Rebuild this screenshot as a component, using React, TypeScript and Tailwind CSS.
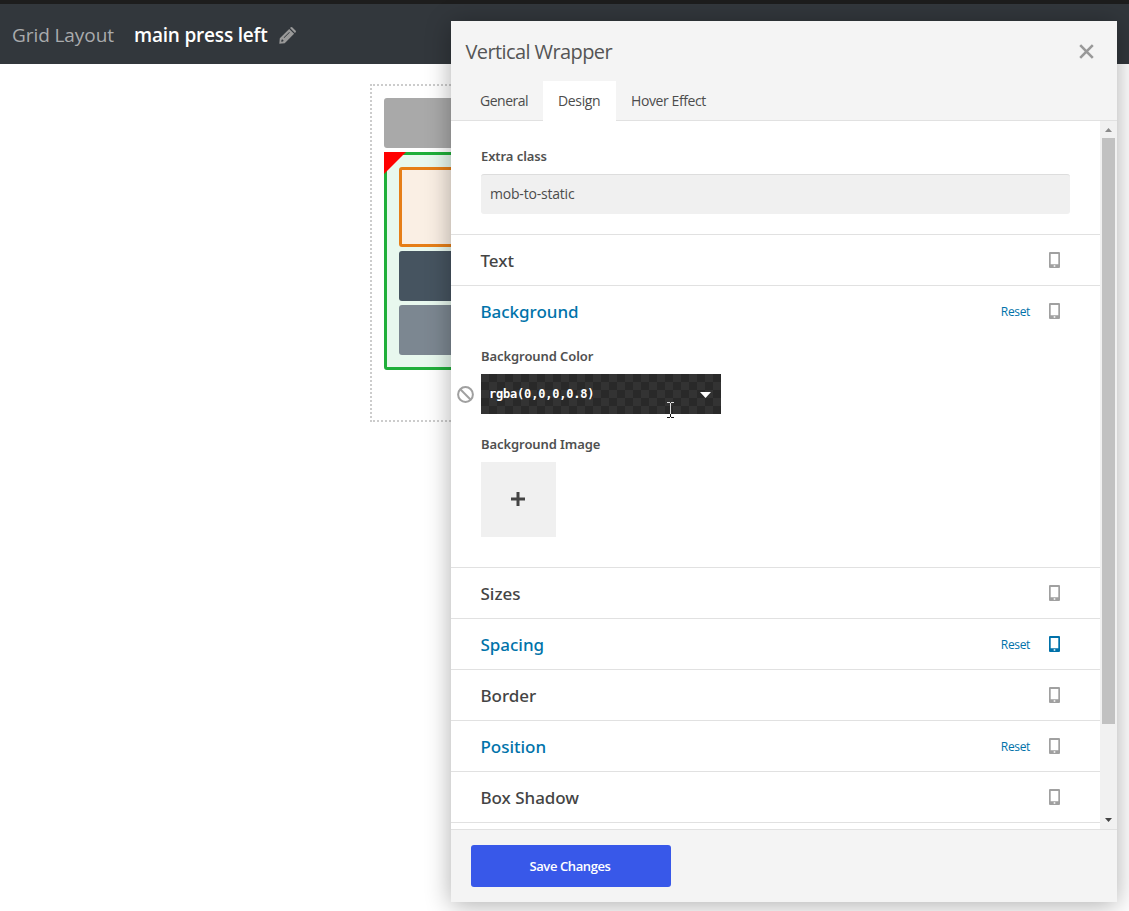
import type { ReactNode } from 'react';

const font = "font-['Open_Sans','Noto_Sans',sans-serif]";

function Phone({ active = false }: { active?: boolean }) {
  return (
    <svg width="11" height="16" viewBox="0 0 11 16" className={active ? 'text-[#0071a9]' : 'text-[#a0a0a0]'}>
      <path
        fill="currentColor"
        fillRule="evenodd"
        d="M1 0h9A1 1 0 0 1 11 1v14A1 1 0 0 1 10 16h-9A1 1 0 0 1 0 15v-14A1 1 0 0 1 1 0ZM1.700 2v10.300h7.600V2ZM4.700 13.200v1.600h1.600v-1.600Z"
      />
    </svg>
  );
}

type SectionProps = { title: string; changed?: boolean; phone?: boolean; children?: ReactNode };

function Section({ title, changed = false, phone = false, children }: SectionProps) {
  return (
    <section className="shrink-0 border-t border-[#e1e1e1]">
      <div className="flex h-[50px] items-center pl-[29.500px] pr-10">
        <h3 className={`pt-px font-['Noto_Sans',sans-serif] text-[17px] font-medium tracking-[-0.03px] ${changed ? 'text-[#0073aa]' : 'text-[#444]'}`}>{title}</h3>
        <div className="ml-auto flex items-center gap-[19px]">
          {changed && <span className="pt-0.5 text-[12px] tracking-[-0.35px] text-[#0073aa]">Reset</span>}
          <Phone active={phone} />
        </div>
      </div>
      {children}
    </section>
  );
}

function Label({ children }: { children: ReactNode }) {
  return <div className="font-['Noto_Sans',sans-serif] text-[13px] leading-[18px] font-semibold tracking-[-0.08px] text-[#505050]">{children}</div>;
}

function Header() {
  return (
    <header className="flex h-16 items-center border-t-4 border-[#1d1d1d] bg-[#32373c] pl-3">
      <span className="w-[122px] pt-0.5 text-[19px] tracking-[-0.08px] whitespace-nowrap text-[#a9abad]">Grid Layout</span>
      <span className="w-[145px] pt-0.5 text-[19px] font-semibold tracking-[-0.2px] whitespace-nowrap text-white">main press left</span>
      <svg className="mt-0.5" width="17" height="17" viewBox="0 0 17 17" fill="#999">
        <path fillRule="evenodd" d="M10.200 1.900 15.100 6.800 5.700 16.200.3 16.700.8 11.300ZM2.500 13 2.200 14.800 4 14.500 4.700 13.800 3.200 12.300ZM10.300 4.900 4.700 10.500 5.200 11 10.800 5.400Z" />
        <path d="m11 1.100.8-.8q.7-.5 1.400 0l3.500 3.500q.5.700 0 1.400l-.8.8Z" />
      </svg>
    </header>
  );
}

function Canvas() {
  return (
    <main className="ml-[370px] mt-5 h-[338px] w-[700px] border-2 border-dotted border-[#ccc] p-3">
      <div className="h-[50px] rounded-[3px] bg-[#a9a9a9]" />
      <div className="relative mt-1 flex h-[218px] flex-col gap-1 rounded-[3px] border-3 border-[#1faf3a] bg-[#e8f8ee] p-3">
        <svg width="22" height="22" className="absolute -top-[3px] -left-[3px]">
          <path d="M0 0h22L0 22Z" fill="red" />
        </svg>
        <div className="h-20 shrink-0 rounded-[3px] border-3 border-[#e67e17] bg-[#faefe4]" />
        <div className="h-[50px] shrink-0 rounded-[3px] bg-[#465460]" />
        <div className="h-[50px] shrink-0 rounded-[3px] bg-[#7c8791]" />
      </div>
    </main>
  );
}

function ColorField() {
  return (
    <div className="-ml-6 mt-[9px] flex items-center gap-[7px]">
      <svg width="17" height="17" viewBox="0 0 17 17" fill="none" stroke="#a0a0a0" strokeWidth="2">
        <circle cx="8.500" cy="8.500" r="7.400" />
        <path d="m3.300 3.300 10.400 10.400" />
      </svg>
      <div className="relative flex h-10 w-60 items-center bg-[#292929] bg-[repeating-conic-gradient(#292929_0_25%,#333333_0_50%)] bg-[length:16px_16px] pl-2 pr-[10px]">
        <span className="font-['DejaVu_Sans_Mono',monospace] text-[12px] font-bold tracking-[-0.2px] text-white">rgba(0,0,0,0.8)</span>
        <svg className="ml-auto mt-0.5" width="11" height="6" viewBox="0 0 11 6">
          <path d="M0 0h11L5.500 6Z" fill="white" />
        </svg>
        <svg className="absolute top-[28px] left-[186px]" width="7" height="16" viewBox="0 0 7 16" shapeRendering="crispEdges">
          <path d="M0 .5h3M4 .5h3M3.500 1v11" stroke="#ddd" />
          <path d="M3.500 12v3M0 15.500h3M4 15.500h3" stroke="#111" />
        </svg>
      </div>
    </div>
  );
}

function ScrollBar() {
  return (
    <div className="flex w-[17px] shrink-0 flex-col items-center bg-[#f1f1f1]">
      <div className="flex h-[17px] items-center">
        <svg width="7" height="4" viewBox="0 0 7 4"><path d="M0 4 3.500 0 7 4Z" fill="#8b8b8b" /></svg>
      </div>
      <div className="h-[586px] w-[13px] bg-[#c1c1c1]" />
      <div className="mt-auto flex h-[17px] items-center pb-0.5">
        <svg width="7" height="4" viewBox="0 0 7 4"><path d="M0 0 3.500 4 7 0Z" fill="#444" /></svg>
      </div>
    </div>
  );
}

function Dialog() {
  return (
    <div className="absolute top-[21px] left-[451px] flex h-[881px] w-[666px] flex-col bg-[#f4f4f4] shadow-[0_3px_24px_rgba(0,0,0,0.32)]">
      <div className="flex h-[60px] shrink-0 items-center justify-between pl-[14.500px] pr-[23px]">
        <h2 className="pt-0.5 text-[20px] tracking-[-0.6px] text-[#555]">Vertical Wrapper</h2>
        <svg width="15" height="15" viewBox="0 0 15 15" stroke="#999" strokeWidth="2.600">
          <path d="m1.200 1.200 12.600 12.600M13.800 1.200 1.200 13.800" />
        </svg>
      </div>
      <nav className="flex h-10 shrink-0 border-b border-[#e1e1e1] pl-[14px] text-[14px] leading-10 whitespace-nowrap text-[#4c4c4c]">
        <span className="w-[78px] pl-[15px] tracking-[-0.5px]">General</span>
        <span className="h-10 w-[73px] bg-white pl-[15px] tracking-[-0.35px]">Design</span>
        <span className="pl-[15px] tracking-[-0.4px]">Hover Effect</span>
      </nav>
      <div className="flex h-[708px] shrink-0">
        <div className="flex min-w-0 flex-1 flex-col overflow-hidden bg-white">
          <div className="h-[113px] shrink-0 pt-[26px] pr-[30px] pl-[30px]">
            <Label>Extra class</Label>
            <div className="mt-[9px] flex h-10 items-center rounded-[3px] border-t border-[#ddd] bg-[#f0f0f0] pl-[9px] pb-0.5 text-[14px] tracking-[-0.2px] text-[#4c4c4c]">mob-to-static</div>
          </div>
          <Section title="Text" />
          <Section title="Background" changed>
            <div className="h-[231px] pt-[11px] pl-[30px]">
              <Label>Background Color</Label>
              <ColorField />
              <div className="mt-[21px]"><Label>Background Image</Label></div>
              <div className="mt-[9px] flex size-[75px] items-center justify-center bg-[#f0f0f0] pr-px pb-px">
                <svg width="14" height="14" viewBox="0 0 14 14" stroke="#444" strokeWidth="3"><path d="M7 0v14M0 7h14" /></svg>
              </div>
            </div>
          </Section>
          <Section title="Sizes" />
          <Section title="Spacing" changed phone />
          <Section title="Border" />
          <Section title="Position" changed />
          <Section title="Box Shadow" />
          <div className="shrink-0 border-t border-[#e1e1e1]" />
        </div>
        <ScrollBar />
      </div>
      <footer className="flex flex-1 items-center border-t border-[#e1e1e1] pl-5">
        <button className="h-[42px] w-[200px] rounded-[3px] bg-[#3858e9] pt-0.5 pr-0.5 text-[13px] font-semibold tracking-[-0.4px] text-white">Save Changes</button>
      </footer>
    </div>
  );
}

export default function App() {
  return (
    <div className={`relative h-[911px] w-[1129px] overflow-hidden bg-white ${font}`}>
      <Header />
      <Canvas />
      <Dialog />
    </div>
  );
}
